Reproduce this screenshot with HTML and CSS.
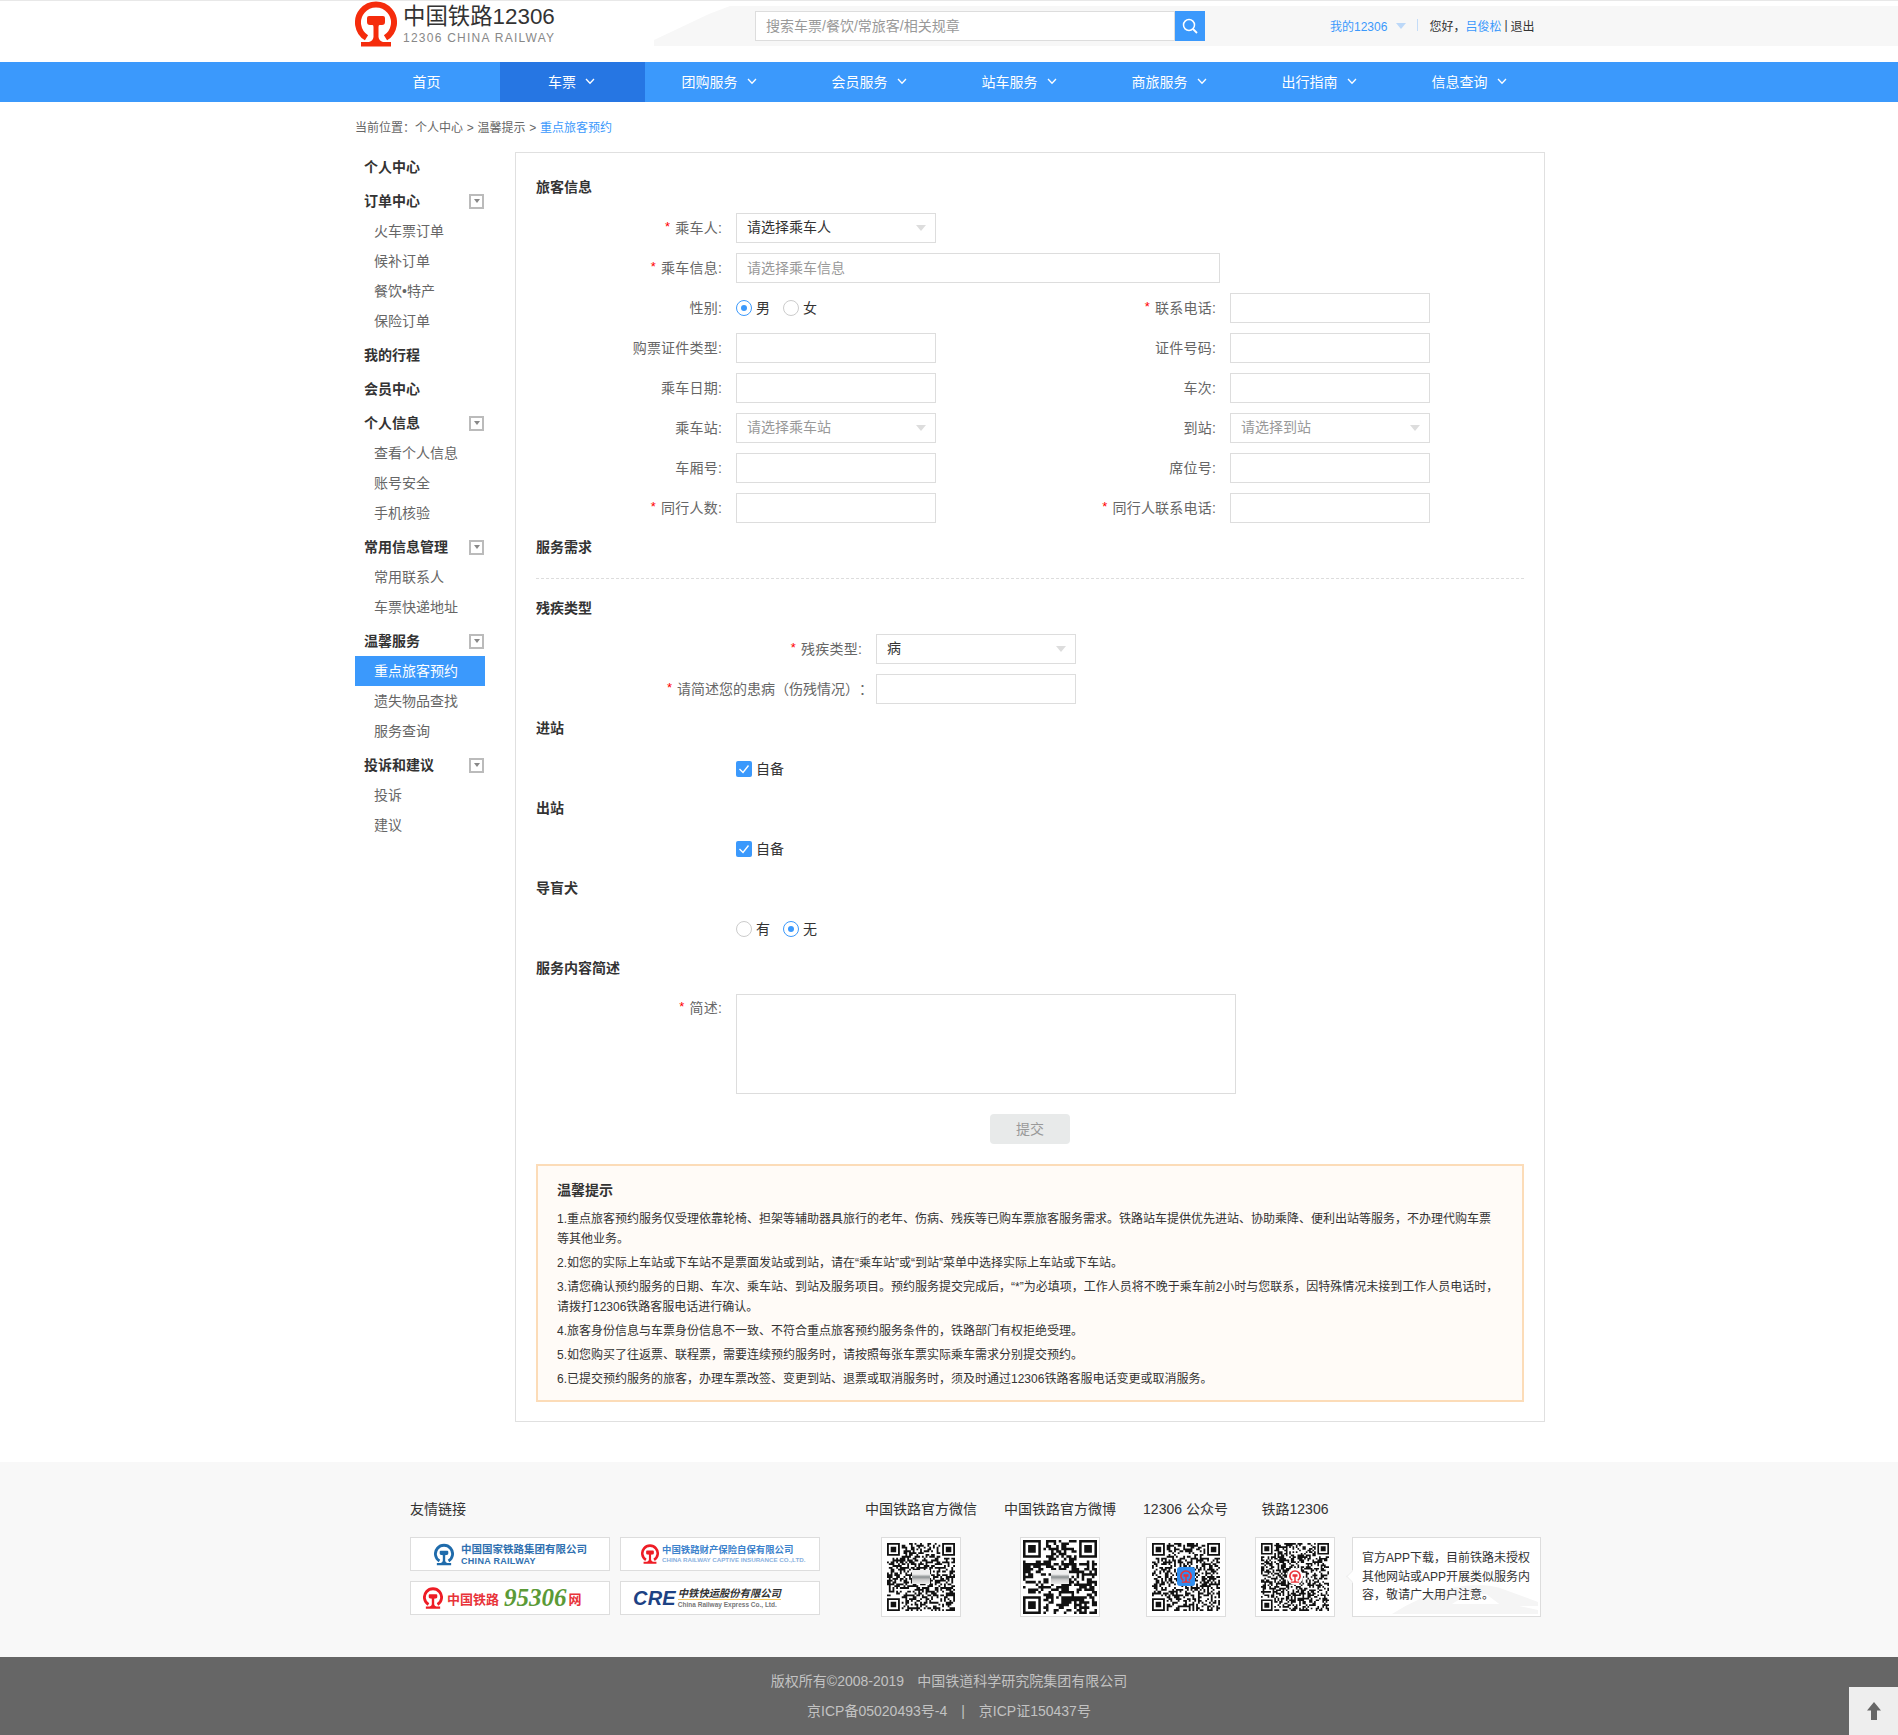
FILE: index.html
```html
<!DOCTYPE html>
<html lang="zh-CN">
<head>
<meta charset="utf-8">
<title>重点旅客预约</title>
<link rel="stylesheet" href="styles.css">
</head>
<body>
<svg class="defs" width="0" height="0" aria-hidden="true">
  <symbol id="rail" viewBox="0 0 42 46">
    <path d="M11.5 36.8A18 18 0 1 1 30.5 36.8" fill="none" stroke="currentColor" stroke-width="6"/>
    <path fill="currentColor" d="M14 15Q12 15 12 17V21Q12 24 15 24H17.500Q18.500 24 18.500 26V36Q18 40 14 41H6V45.500H36V41H28Q24 40 23.500 36V26Q23.500 24 24.500 24H27Q30 24 30 21V17Q30 15 28 15Z"/>
  </symbol>
  <symbol id="chev" viewBox="0 0 10 7">
    <path d="M1 1L5 5.200L9 1" fill="none" stroke="currentColor" stroke-width="1.300"/>
  </symbol>
</svg>

<header class="header">
  <div class="band"></div>
  <div class="wrap head-row">
    <a class="brand">
      <svg class="brand-mark"><use href="#rail"/></svg>
      <span class="brand-text">
        <span class="brand-cn">中国铁路12306</span>
        <span class="brand-en">12306 CHINA RAILWAY</span>
      </span>
    </a>
    <div class="search">
      <input class="search-input" type="text" placeholder="搜索车票/餐饮/常旅客/相关规章">
      <button class="search-btn" type="button" aria-label="搜索">
        <svg width="18" height="18" viewBox="0 0 18 18"><circle cx="8" cy="8" r="5.500" fill="none" stroke="#fff" stroke-width="1.500"/><path d="M12 12L16 16" stroke="#fff" stroke-width="1.800"/></svg>
      </button>
    </div>
    <div class="user">
      <a class="link">我的12306</a>
      <i class="user-tri"></i>
      <i class="user-sep"></i>
      <span>您好，</span><a class="link">吕俊松</a><span class="user-bar">|</span><span>退出</span>
    </div>
  </div>
</header>

<nav class="nav">
  <div class="wrap nav-row">
    <a class="nav-item short">首页</a>
    <a class="nav-item short on">车票<svg class="chev"><use href="#chev"/></svg></a>
    <a class="nav-item">团购服务<svg class="chev"><use href="#chev"/></svg></a>
    <a class="nav-item">会员服务<svg class="chev"><use href="#chev"/></svg></a>
    <a class="nav-item">站车服务<svg class="chev"><use href="#chev"/></svg></a>
    <a class="nav-item">商旅服务<svg class="chev"><use href="#chev"/></svg></a>
    <a class="nav-item">出行指南<svg class="chev"><use href="#chev"/></svg></a>
    <a class="nav-item">信息查询<svg class="chev"><use href="#chev"/></svg></a>
  </div>
</nav>

<div class="wrap crumb">当前位置：个人中心 &gt; 温馨提示 &gt; <span class="link">重点旅客预约</span></div>

<main class="wrap main">
  <aside class="side">
    <div class="side-h">个人中心</div>
    <div class="side-h">订单中心<i class="toggle"></i></div>
    <a class="side-a">火车票订单</a>
    <a class="side-a">候补订单</a>
    <a class="side-a">餐饮•特产</a>
    <a class="side-a">保险订单</a>
    <div class="side-h">我的行程</div>
    <div class="side-h">会员中心</div>
    <div class="side-h">个人信息<i class="toggle"></i></div>
    <a class="side-a">查看个人信息</a>
    <a class="side-a">账号安全</a>
    <a class="side-a">手机核验</a>
    <div class="side-h">常用信息管理<i class="toggle"></i></div>
    <a class="side-a">常用联系人</a>
    <a class="side-a">车票快递地址</a>
    <div class="side-h">温馨服务<i class="toggle"></i></div>
    <a class="side-a on">重点旅客预约</a>
    <a class="side-a">遗失物品查找</a>
    <a class="side-a">服务查询</a>
    <div class="side-h">投诉和建议<i class="toggle"></i></div>
    <a class="side-a">投诉</a>
    <a class="side-a">建议</a>
  </aside>

  <section class="panel">
    <h3 class="sec">旅客信息</h3>
    <div class="row">
      <label class="lab"><i class="req">*</i>乘车人:</label>
      <div class="sel dark">请选择乘车人<i class="sel-tri"></i></div>
    </div>
    <div class="row">
      <label class="lab"><i class="req">*</i>乘车信息:</label>
      <input class="inp wide" type="text" placeholder="请选择乘车信息">
    </div>
    <div class="row">
      <label class="lab">性别:</label>
      <div class="choices">
        <span class="radio on"></span><span class="choice">男</span>
        <span class="radio"></span><span class="choice">女</span>
      </div>
      <label class="lab lab-r"><i class="req">*</i>联系电话:</label>
      <input class="inp" type="text">
    </div>
    <div class="row">
      <label class="lab">购票证件类型:</label>
      <input class="inp" type="text">
      <label class="lab lab-r2">证件号码:</label>
      <input class="inp" type="text">
    </div>
    <div class="row">
      <label class="lab">乘车日期:</label>
      <input class="inp" type="text">
      <label class="lab lab-r2">车次:</label>
      <input class="inp" type="text">
    </div>
    <div class="row">
      <label class="lab">乘车站:</label>
      <div class="sel">请选择乘车站<i class="sel-tri"></i></div>
      <label class="lab lab-r2">到站:</label>
      <div class="sel">请选择到站<i class="sel-tri"></i></div>
    </div>
    <div class="row">
      <label class="lab">车厢号:</label>
      <input class="inp" type="text">
      <label class="lab lab-r2">席位号:</label>
      <input class="inp" type="text">
    </div>
    <div class="row">
      <label class="lab"><i class="req">*</i>同行人数:</label>
      <input class="inp" type="text">
      <label class="lab lab-r2"><i class="req">*</i>同行人联系电话:</label>
      <input class="inp" type="text">
    </div>

    <h3 class="sec tight">服务需求</h3>
    <div class="dash"></div>
    <h3 class="sec">残疾类型</h3>
    <div class="row">
      <label class="lab lab-long"><i class="req">*</i>残疾类型:</label>
      <div class="sel dark">病<i class="sel-tri"></i></div>
    </div>
    <div class="row">
      <label class="lab lab-long lab-over"><i class="req">*</i>请简述您的患病（伤残情况）：</label>
      <input class="inp" type="text">
    </div>

    <h3 class="sec">进站</h3>
    <div class="row">
      <span class="lab"></span>
      <div class="choices"><span class="check"><svg width="16" height="16" viewBox="0 0 16 16"><path d="M3.500 8L7 11.500L12.500 4.500" fill="none" stroke="#fff" stroke-width="1.400"/></svg></span><span class="choice">自备</span></div>
    </div>
    <h3 class="sec">出站</h3>
    <div class="row">
      <span class="lab"></span>
      <div class="choices"><span class="check"><svg width="16" height="16" viewBox="0 0 16 16"><path d="M3.500 8L7 11.500L12.500 4.500" fill="none" stroke="#fff" stroke-width="1.400"/></svg></span><span class="choice">自备</span></div>
    </div>
    <h3 class="sec">导盲犬</h3>
    <div class="row">
      <span class="lab"></span>
      <div class="choices">
        <span class="radio"></span><span class="choice">有</span>
        <span class="radio on"></span><span class="choice">无</span>
      </div>
    </div>
    <h3 class="sec">服务内容简述</h3>
    <div class="row row-area">
      <label class="lab lab-area"><i class="req">*</i>简述:</label>
      <textarea class="area"></textarea>
    </div>
    <div class="submit-row"><button class="submit" type="button">提交</button></div>

    <div class="tips">
      <h4 class="tips-h">温馨提示</h4>
      <p>1.重点旅客预约服务仅受理依靠轮椅、担架等辅助器具旅行的老年、伤病、残疾等已购车票旅客服务需求。铁路站车提供优先进站、协助乘降、便利出站等服务，不办理代购车票等其他业务。</p>
      <p>2.如您的实际上车站或下车站不是票面发站或到站，请在“乘车站”或“到站”菜单中选择实际上车站或下车站。</p>
      <p>3.请您确认预约服务的日期、车次、乘车站、到站及服务项目。预约服务提交完成后，“*”为必填项，工作人员将不晚于乘车前2小时与您联系，因特殊情况未接到工作人员电话时，请拨打12306铁路客服电话进行确认。</p>
      <p>4.旅客身份信息与车票身份信息不一致、不符合重点旅客预约服务条件的，铁路部门有权拒绝受理。</p>
      <p>5.如您购买了往返票、联程票，需要连续预约服务时，请按照每张车票实际乘车需求分别提交预约。</p>
      <p>6.已提交预约服务的旅客，办理车票改签、变更到站、退票或取消服务时，须及时通过12306铁路客服电话变更或取消服务。</p>
    </div>
  </section>
</main>

<footer class="foot">
  <div class="foot-row">
    <div class="friends">
      <div class="foot-t">友情链接</div>
      <div class="friend-grid">
        <a class="fl fl1">
          <svg class="fl1-mark"><use href="#rail"/></svg>
          <span class="fl-stack"><b class="fl1-cn">中国国家铁路集团有限公司</b><span class="fl1-en">CHINA RAILWAY</span></span>
        </a>
        <a class="fl fl2">
          <svg class="fl2-mark"><use href="#rail"/></svg>
          <span class="fl-stack"><b class="fl2-cn">中国铁路财产保险自保有限公司</b><span class="fl2-en">CHINA RAILWAY CAPTIVE INSURANCE CO.,LTD.</span></span>
        </a>
        <a class="fl fl3">
          <svg class="fl3-mark"><use href="#rail"/></svg>
          <b class="fl3-cn">中国铁路</b><b class="fl3-num">95306</b><b class="fl3-net">网</b>
        </a>
        <a class="fl fl4">
          <b class="fl4-cre">CRE</b>
          <span class="fl-stack"><b class="fl4-cn">中铁快运股份有限公司</b><span class="fl4-en">China Railway Express Co., Ltd.</span></span>
        </a>
      </div>
    </div>
    <div class="qr-col c112">
      <div class="foot-t">中国铁路官方微信</div>
      <div class="qrbox"><svg class="qr q67" data-seed="11" data-n="37"></svg><i class="qr-pic"></i></div>
    </div>
    <div class="qr-col c112">
      <div class="foot-t">中国铁路官方微博</div>
      <div class="qrbox"><svg class="qr q74" data-seed="29" data-n="29"></svg><i class="qr-pic"></i></div>
    </div>
    <div class="qr-col c85">
      <div class="foot-t">12306 公众号</div>
      <div class="qrbox"><svg class="qr q67" data-seed="47" data-n="37"></svg><i class="qr-app"><svg class="qr-mark"><use href="#rail"/></svg></i></div>
    </div>
    <div class="qr-col c80">
      <div class="foot-t">铁路12306</div>
      <div class="qrbox"><svg class="qr q67" data-seed="73" data-n="41"></svg><i class="qr-round"><svg class="qr-mark"><use href="#rail"/></svg></i></div>
    </div>
    <div class="note">
      <svg class="note-train" width="150" height="36" viewBox="0 0 150 36"><path fill="#f5f5f5" d="M2 34Q30 16 62 8Q90 2 110 8L148 22V26H112L96 14H78L62 24H120L148 30V34Z"/></svg>
      <p class="note-text">官方APP下载，目前铁路未授权其他网站或APP开展类似服务内容，敬请广大用户注意。</p>
    </div>
  </div>
</footer>

<div class="copy">
  <div class="copy-line"><span>版权所有©2008-2019</span><span>中国铁道科学研究院集团有限公司</span></div>
  <div class="copy-line wide-gap"><span>京ICP备05020493号-4</span><span>|</span><span>京ICP证150437号</span></div>
  <a class="top" aria-label="返回顶部">
    <svg width="14" height="18" viewBox="0 0 14 18"><path fill="#666" d="M7 0L14 8.500H10V18H4V8.500H0Z"/></svg>
  </a>
</div>
<script src="qr.js"></script>
</body>
</html>
```

FILE: styles.css
```css
* { box-sizing: border-box; }
html, body { margin: 0; padding: 0; }
body {
  font-family: "Liberation Sans", "Noto Sans CJK SC", sans-serif;
  font-size: 14px;
  color: #333;
  background: #fff;
  position: relative;
  width: 1898px;
  text-spacing-trim: space-all;
}
h3, h4, p { margin: 0; }
i { font-style: normal; }
.defs { position: absolute; }
.wrap { width: 1190px; margin-left: 355px; }
.link { color: #3b99fc; }

/* header */
.header { height: 62px; border-top: 1px solid #e8e8e8; position: relative; }
.band {
  position: absolute;
  left: 654px;
  right: 0;
  top: 5px;
  height: 40px;
  background: #f7f7f7;
  clip-path: polygon(0 40px, 0 34px, 55px 8px, 76px 0, 100% 0, 100% 100%);
}
.head-row { display: flex; position: relative; }
.brand { display: flex; width: 400px; height: 46px; }
.brand-mark { width: 42px; height: 46px; color: #f52c0c; }
.brand-text { display: flex; flex-direction: column; margin-left: 6px; }
.brand-cn { font-size: 22.400px; line-height: 31px; color: #333; }
.brand-en { font-size: 12px; line-height: 14px; color: #888; letter-spacing: 1.250px; white-space: nowrap; margin-top: -1px; }
.search { display: flex; margin-top: 10px; height: 30px; }
.search-input {
  width: 420px;
  height: 30px;
  border: 1px solid #ddd;
  background: #fff;
  padding: 0 10px 1px;
  font: inherit;
  outline: none;
}
.search-input::placeholder { color: #999; opacity: 1; }
.search-btn {
  width: 30px;
  height: 30px;
  border: 0;
  padding: 0;
  background: #3b99fc;
  display: flex;
  align-items: center;
  justify-content: center;
}
.user {
  display: flex;
  align-items: center;
  height: 30px;
  margin-top: 9px;
  margin-left: 125px;
  font-size: 12px;
  white-space: nowrap;
}
.user-tri {
  width: 0;
  height: 0;
  margin: 2px 0 0 9px;
  border-left: 5px solid transparent;
  border-right: 5px solid transparent;
  border-top: 6px solid #bcd8f8;
}
.user-sep { width: 1px; height: 12px; background: #c4dcf8; margin: 0 11px; }
.user-bar { margin: 0 3px; }

/* nav */
.nav { background: #3b99fc; height: 40px; }
.nav-row { display: flex; }
.nav-item {
  width: 150px;
  height: 40px;
  display: flex;
  align-items: center;
  justify-content: center;
  color: #fff;
  font-size: 14px;
  padding: 0 2px 2px 0;
}
.nav-item.short { width: 145px; }
.nav-item.on { background: #2676e3; }
.chev { width: 10px; height: 7px; margin-left: 9px; color: #fff; }

.crumb { height: 50px; line-height: 52px; font-size: 12px; color: #666; word-spacing: .4px; }

/* main */
.main { display: flex; align-items: flex-start; margin-bottom: 40px; }
.side { width: 130px; margin-right: 30px; }
.side-h {
  height: 30px;
  line-height: 30px;
  margin-top: 4px;
  padding-left: 9px;
  font-size: 14px;
  font-weight: 700;
  position: relative;
  display: flex;
  align-items: center;
  justify-content: space-between;
  padding-right: 1px;
}
.side-h:first-child { margin-top: 0; }
.toggle {
  width: 15px;
  height: 15px;
  border: 2px solid #bbb;
  background: #fff;
  display: flex;
  align-items: center;
  justify-content: center;
}
.toggle::after {
  content: "";
  border-left: 3px solid transparent;
  border-right: 3px solid transparent;
  border-top: 4px solid #888;
}
.side-a { display: block; height: 30px; line-height: 30px; padding-left: 19px; color: #666; }
.side-a.on { background: #3b99fc; color: #fff; }

.panel {
  width: 1030px;
  border: 1px solid #e0e0e0;
  padding: 20px 20px 19px;
}
.sec { height: 30px; line-height: 29px; font-size: 14px; font-weight: 700; margin-bottom: 10px; color: #333; }
.sec.tight { margin-bottom: 0; }
.dash { border-top: 1px dashed #ddd; margin: 15px 0 15px; }
.row { display: flex; align-items: center; height: 30px; margin-bottom: 10px; }
.lab {
  width: 186px;
  margin-right: 14px;
  padding-bottom: 2px;
  text-align: right;
  color: #666;
  flex: none;
  white-space: nowrap;
  letter-spacing: .2px;
}
.lab-r, .lab-r2 { width: 280px; }
.lab-long { width: 326px; }
.lab-over { width: 337px; margin-right: 3px; letter-spacing: 0; }
.req { color: #f00; margin-right: 5px; font-size: 13px; position: relative; top: -2px; }
.inp, .sel {
  width: 200px;
  height: 30px;
  border: 1px solid #ddd;
  background: #fff;
  padding: 0 10px 1px;
  font: inherit;
  outline: none;
  flex: none;
}
.inp.wide { width: 484px; }
.inp::placeholder { color: #999; opacity: 1; }
.sel { line-height: 27px; color: #999; position: relative; }
.sel.dark { color: #333; }
.sel-tri {
  position: absolute;
  right: 9px;
  top: 11px;
  border-left: 5.5px solid transparent;
  border-right: 5.5px solid transparent;
  border-top: 6px solid #ddd;
}
.choices { display: flex; align-items: center; width: 200px; flex: none; }
.choice { margin: -2px 13px 0 4px; color: #333; }
.radio {
  width: 16px;
  height: 16px;
  border: 1px solid #ccc;
  border-radius: 50%;
  display: flex;
  align-items: center;
  justify-content: center;
  background: #fff;
}
.radio.on { border-color: #3b99fc; }
.radio.on::after { content: ""; width: 6px; height: 6px; border-radius: 50%; background: #3b99fc; }
.check { width: 16px; height: 16px; background: #3b99fc; border-radius: 2px; display: flex; }
.row-area { height: 100px; align-items: flex-start; margin-bottom: 20px; }
.lab-area { line-height: 28px; }
.area { width: 500px; height: 100px; border: 1px solid #ddd; resize: none; outline: none; display: block; }
.submit-row { display: flex; justify-content: center; margin: 0 0 20px; }
.submit {
  width: 80px;
  height: 30px;
  border: 0;
  border-radius: 4px;
  background: #e8eaea;
  color: #999;
  font: inherit;
  padding: 0 0 2px;
}

.tips {
  border: 2px solid #fcdcb8;
  background: #fffbf7;
  padding: 12px 23px 0 19px;
  height: 238px;
  font-size: 12px;
  line-height: 20px;
}
.tips-h { font-size: 14px; line-height: 24px; margin-bottom: 7px; font-weight: 700; }
.tips p { margin-bottom: 4px; color: #333; }

/* footer */
.foot { background: #f8f8f8; height: 195px; padding: 38px 0 0 410px; }
.foot-row { display: flex; align-items: flex-start; }
.foot-t { height: 20px; line-height: 18px; font-size: 14px; margin-bottom: 17px; white-space: nowrap; text-align: center; }
.friends { width: 410px; margin-right: 45px; }
.friends .foot-t { text-align: left; }
.friend-grid { display: grid; grid-template-columns: 200px 200px; grid-auto-rows: 34px; gap: 10px; }
.fl { display: flex; background: #fff; border: 1px solid #ddd; align-items: center; white-space: nowrap; overflow: hidden; }
.fl-stack { display: flex; flex-direction: column; }
.fl1 { padding-left: 23px; }
.fl1-mark { width: 20px; height: 23px; color: #1f6bab; margin-right: 7px; flex: none; }
.fl1-cn { font-size: 10.500px; line-height: 13px; color: #2f70b0; }
.fl1-en { font-size: 9px; line-height: 10px; color: #2f70b0; letter-spacing: .3px; font-weight: 700; }
.fl2 { padding-left: 20px; }
.fl2-mark { width: 18px; height: 20px; color: #ee1c25; margin-right: 3px; flex: none; }
.fl2-cn { font-size: 9.400px; line-height: 12px; color: #3c82cc; }
.fl2-en { font-size: 6.200px; line-height: 8px; color: #88b0e0; font-weight: 700; }
.fl3 { padding-left: 12px; }
.fl3-mark { width: 20px; height: 24px; color: #ee1c25; margin-right: 4px; flex: none; }
.fl3-cn { font-size: 13px; color: #e8333a; }
.fl3-num { font-family: "Liberation Serif", serif; font-style: italic; font-size: 25px; line-height: 30px; color: #5b9a36; margin: 0 2px 0 5px; }
.fl3-net { font-size: 13px; color: #e8333a; }
.fl4 { padding-left: 12px; }
.fl4-cre { font-size: 20px; font-style: italic; letter-spacing: .2px; color: #1d4284; margin-right: 2px; }
.fl4-cn { font-size: 10.300px; line-height: 11px; font-style: italic; color: #333; border-bottom: 1px solid #f5c860; }
.fl4-en { font-size: 6.500px; line-height: 9px; color: #777; font-weight: 700; }

.qr-col { display: flex; flex-direction: column; align-items: center; margin-right: 27px; flex: none; }
.c112 { width: 112px; }
.c85 { width: 85px; }
.c80 { width: 80px; margin-right: 17px; }
.qrbox {
  width: 80px;
  height: 80px;
  border: 1px solid #ddd;
  background: #fff;
  display: flex;
  align-items: center;
  justify-content: center;
  position: relative;
}
.qr { display: block; }
.q67 { width: 68px; height: 68px; }
.q74 { width: 74px; height: 74px; }
.qr-pic {
  position: absolute;
  left: 30px; top: 32px;
  width: 18px; height: 14px;
  background: linear-gradient(#eee 0, #eee 30%, #8a8f90 50%, #ccc 70%, #eee 100%);
}
.qr-app {
  position: absolute;
  left: 30px; top: 29px;
  width: 18px; height: 19px;
  border-radius: 3px;
  background: #2f8ef0;
  display: flex;
  align-items: center;
  justify-content: center;
}
.qr-round {
  position: absolute;
  left: 31px; top: 30px;
  width: 16px; height: 17px;
  border-radius: 50%;
  background: #fff;
  display: flex;
  align-items: center;
  justify-content: center;
}
.qr-mark { width: 12px; height: 13px; color: #e8333a; }

.note {
  width: 189px;
  height: 80px;
  margin-top: 37px;
  border: 1px solid #ddd;
  background: #fff;
  display: flex;
  align-items: center;
  padding: 0 5px 0 9px;
  position: relative;
  flex: none;
  overflow: visible;
}
.note::before {
  content: "";
  position: absolute;
  left: -5px;
  top: 34px;
  width: 8px;
  height: 8px;
  background: #fff;
  transform: rotate(45deg);
  border-left: 1px solid #eee;
  border-bottom: 1px solid #eee;
}
.note-train { position: absolute; right: 0; bottom: 0; }
.note-text { font-size: 12px; line-height: 18.500px; color: #333; position: relative; }

.copy {
  background: #666;
  height: 78px;
  padding-top: 10px;
  position: relative;
  color: #c2c2c2;
  font-size: 14px;
}
.copy-line { display: flex; justify-content: center; gap: 13px; height: 30px; line-height: 29px; }
.copy-line.wide-gap { gap: 14px; }
.top {
  position: absolute;
  right: 0;
  bottom: 0;
  width: 49px;
  height: 48px;
  background: #eee;
  display: flex;
  align-items: center;
  justify-content: center;
}
```

FILE: qr.js
```js
// Draws the decorative QR-style code squares from a seed.
document.querySelectorAll('.qr').forEach(function (svg) {
  var seed = Number(svg.dataset.seed);
  var n = Number(svg.dataset.n);
  function rnd() {
    seed = (seed * 1664525 + 1013904223) % 4294967296;
    return seed / 4294967296;
  }
  function inFinder(x, y) {
    return (x < 8 && y < 8) || (x >= n - 8 && y < 8) || (x < 8 && y >= n - 8);
  }
  var d = '';
  function cell(x, y, w, h) {
    d += 'M' + x + ' ' + y + 'h' + w + 'v' + h + 'h-' + w + 'z';
  }
  for (var y = 0; y < n; y++) {
    for (var x = 0; x < n; x++) {
      if (!inFinder(x, y) && rnd() > 0.5) cell(x, y, 1, 1);
    }
  }
  [[0, 0], [n - 7, 0], [0, n - 7]].forEach(function (p) {
    var px = p[0], py = p[1];
    cell(px, py, 7, 1);
    cell(px, py + 6, 7, 1);
    cell(px, py + 1, 1, 5);
    cell(px + 6, py + 1, 1, 5);
    cell(px + 2, py + 2, 3, 3);
  });
  svg.setAttribute('viewBox', '0 0 ' + n + ' ' + n);
  var path = document.createElementNS('http://www.w3.org/2000/svg', 'path');
  path.setAttribute('d', d);
  path.setAttribute('fill', '#111');
  svg.appendChild(path);
});
```
